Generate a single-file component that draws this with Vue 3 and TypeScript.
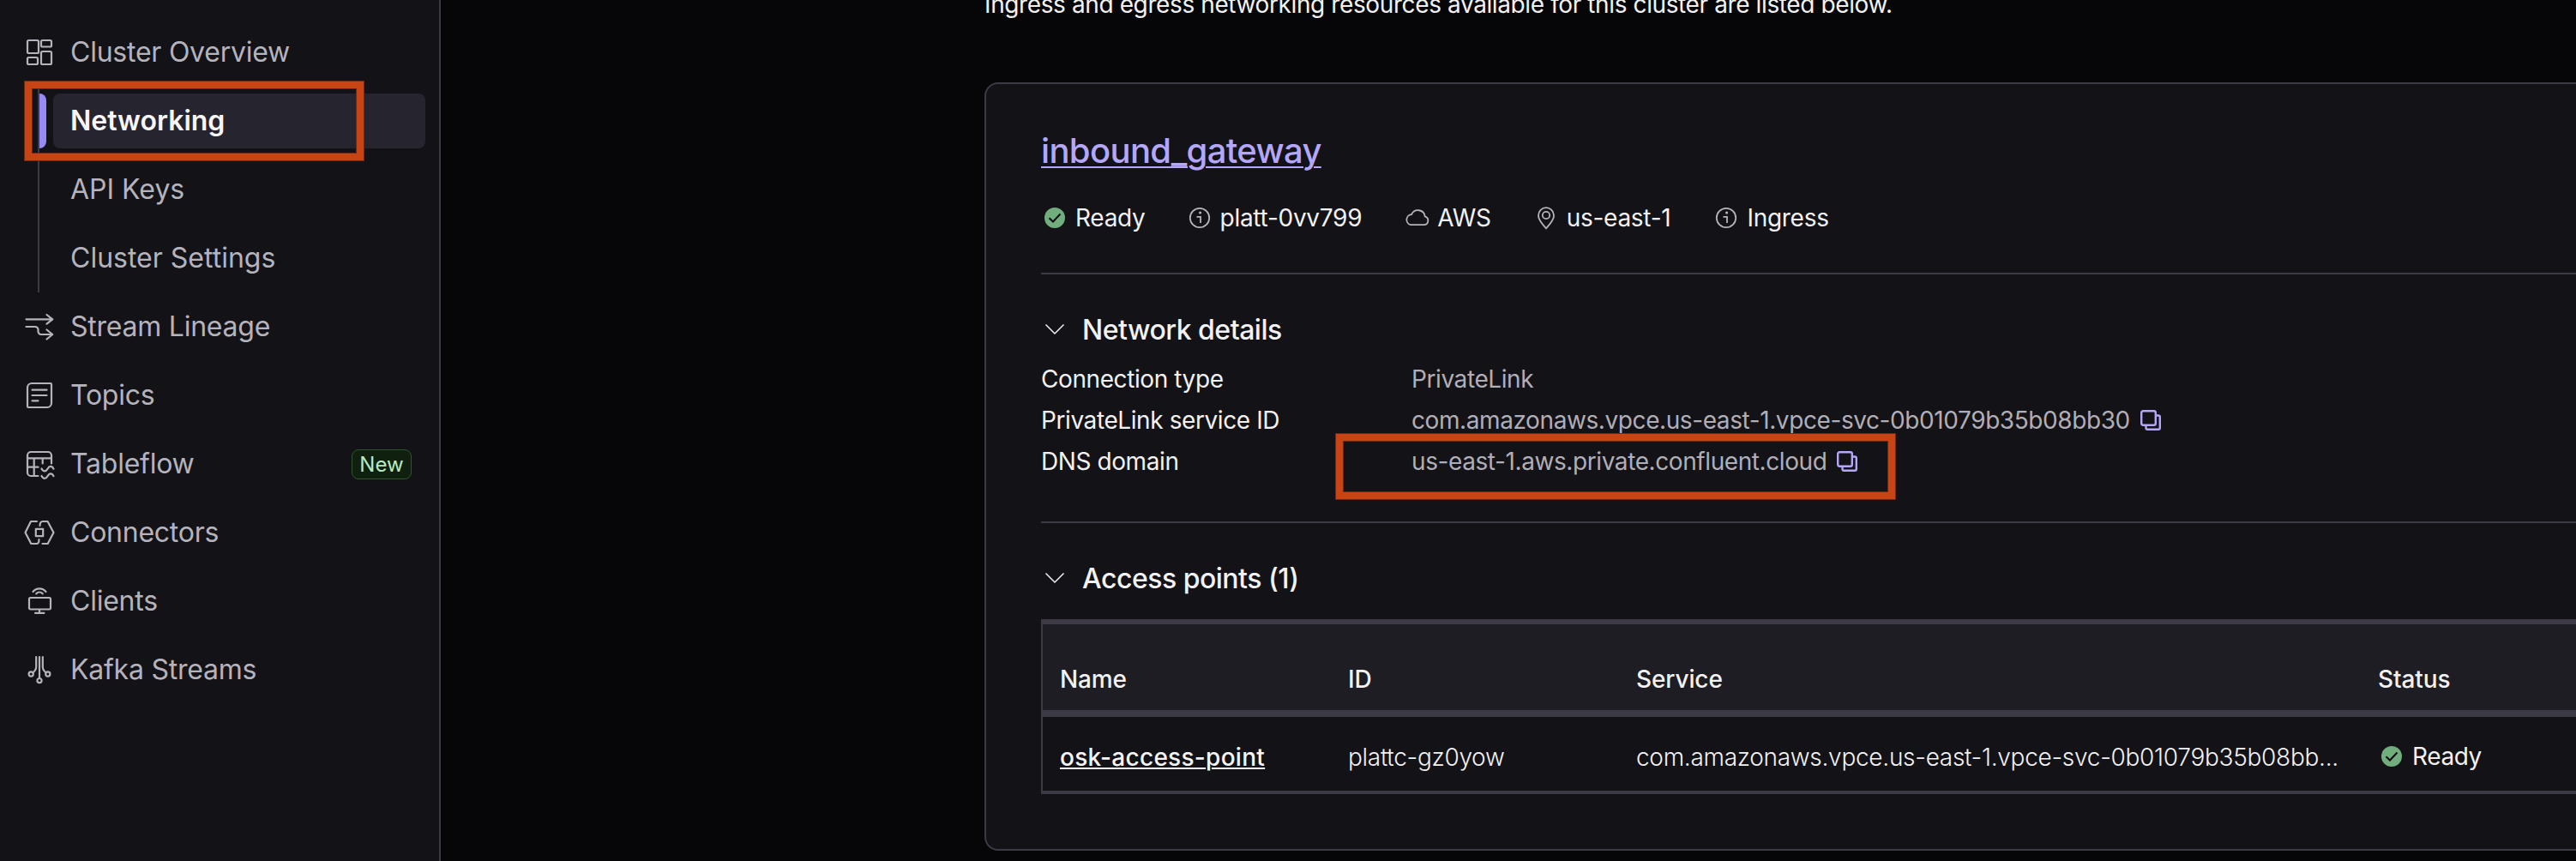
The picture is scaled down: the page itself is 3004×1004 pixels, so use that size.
<script setup lang="ts">
interface NavItem {
  label: string
  icon?: string
  active?: boolean
  badge?: string
}

const topItems: NavItem[] = [{ label: 'Cluster Overview', icon: 'overview' }]
const subItems: NavItem[] = [
  { label: 'Networking', active: true },
  { label: 'API Keys' },
  { label: 'Cluster Settings' },
]
const restItems: NavItem[] = [
  { label: 'Stream Lineage', icon: 'lineage' },
  { label: 'Topics', icon: 'topics' },
  { label: 'Tableflow', icon: 'tableflow', badge: 'New' },
  { label: 'Connectors', icon: 'connectors' },
  { label: 'Clients', icon: 'clients' },
  { label: 'Kafka Streams', icon: 'kafka' },
]

// Stroke paths on a 40x40 grid
const navPaths: Record<string, string> = {
  overview:
    'M7.5 6h10a1.5 1.5 0 0 1 1.5 1.5v12a1.5 1.5 0 0 1-1.5 1.5h-10a1.5 1.5 0 0 1-1.5-1.5v-12a1.5 1.5 0 0 1 1.5-1.5zM23.5 6h9a1.5 1.5 0 0 1 1.5 1.5v4.5a1.5 1.5 0 0 1-1.5 1.5h-9a1.5 1.5 0 0 1-1.5-1.5v-4.5a1.5 1.5 0 0 1 1.5-1.5zM7.5 26h9a1.5 1.5 0 0 1 1.5 1.5v5a1.5 1.5 0 0 1-1.5 1.5h-9a1.5 1.5 0 0 1-1.5-1.5v-5a1.5 1.5 0 0 1 1.5-1.5zM23.5 19h9a1.5 1.5 0 0 1 1.5 1.5v12a1.5 1.5 0 0 1-1.5 1.5h-9a1.5 1.5 0 0 1-1.5-1.5v-12a1.5 1.5 0 0 1 1.5-1.5z',
  lineage:
    'M4.5 11.3H35M28.5 6l6.8 5.3l-6.8 5.4M4.5 20H15a3.5 3.5 0 0 1 3.5 3.5V25.5a3.5 3.5 0 0 0 3.5 3.5H35M28.5 23.5l6.8 5.5l-6.8 5.5',
  topics:
    'M11 6H33a1 1 0 0 1 1 1V29a5 5 0 0 1-5 5H7a1 1 0 0 1-1-1V11a5 5 0 0 1 5-5zM11.5 13.7H28.5M11.5 20H28.5M11.5 26.3H18.5',
  tableflow:
    'M34 19.5V10a4 4 0 0 0-4-4H10a4 4 0 0 0-4 4V30a4 4 0 0 0 4 4H18.5M6 13.3H34M13.7 13.3V34M6 23.7H18.5M23.7 13.3V19.5M22.5 25.5c2 3.8 5 3.8 7 .2s5-3.8 7 0M22.5 34c2 3.8 5 3.8 7 .2s5-3.8 7 0',
  connectors:
    'M17 7H10L3.5 20L10.3 33H16.5C19 33 19.5 31.5 19.5 28M20.5 12C20.5 8.5 21.5 7 24 7H29.5L36.5 20L29.7 33H23.5M15.8 15.8H24.2V24.2H15.8Z',
  clients:
    'M9.5 16H31.5a1.5 1.5 0 0 1 1.5 1.5V28a1.5 1.5 0 0 1-1.5 1.5H9.5A1.5 1.5 0 0 1 8 28V17.5A1.5 1.5 0 0 1 9.5 16zM20 29.5V33.5M15 33.8H25.5M12.5 9C16.5 4.2 23.5 4.2 27.5 9M16.3 11.3C18.3 8.9 21.7 8.9 23.7 11.3',
  kafka:
    'M16.2 5V17C16.2 20.5 15.5 20.5 12.5 23.3M20 5V30M23.8 5V17C23.8 20.5 24.5 20.5 27.5 23.3M12.8 25a2.6 2.6 0 1 1-5.2 0a2.6 2.6 0 1 1 5.2 0zM22.6 32.6a2.6 2.6 0 1 1-5.2 0a2.6 2.6 0 1 1 5.2 0zM32.4 25a2.6 2.6 0 1 1-5.2 0a2.6 2.6 0 1 1 5.2 0z',
}

const facts = [
  { icon: 'check', text: 'Ready' },
  { icon: 'info', text: 'platt-0vv799' },
  { icon: 'cloud', text: 'AWS' },
  { icon: 'pin', text: 'us-east-1' },
  { icon: 'info', text: 'Ingress' },
]

const details = [
  { label: 'Connection type', value: 'PrivateLink', copy: false, marked: false },
  { label: 'PrivateLink service ID', value: 'com.amazonaws.vpce.us-east-1.vpce-svc-0b01079b35b08bb30', copy: true, marked: false },
  { label: 'DNS domain', value: 'us-east-1.aws.private.confluent.cloud', copy: true, marked: true },
]
</script>

<template>
  <div class="page">
    <aside class="sidebar">
      <div v-for="item in topItems" :key="item.label" class="nav-row">
        <svg class="nav-icon" viewBox="0 0 40 40"><path :d="navPaths[item.icon!]" /></svg>
        <span class="nav-label">{{ item.label }}</span>
      </div>
      <div class="sub-nav">
        <div v-for="item in subItems" :key="item.label" class="sub-row" :class="{ active: item.active }">
          <span class="nav-label">{{ item.label }}</span>
        </div>
        <div class="callout callout-nav"></div>
      </div>
      <div v-for="item in restItems" :key="item.label" class="nav-row">
        <svg class="nav-icon" viewBox="0 0 40 40"><path :d="navPaths[item.icon!]" /></svg>
        <span class="nav-label">{{ item.label }}</span>
        <span v-if="item.badge" class="badge">{{ item.badge }}</span>
      </div>
    </aside>

    <main class="main">
      <p class="intro">Ingress and egress networking resources available for this cluster are listed below.</p>
      <section class="card">
        <h2 class="title"><a>inbound_gateway</a></h2>
        <div class="facts">
          <div v-for="fact in facts" :key="fact.text" class="fact">
            <svg class="icon" viewBox="0 0 32 32">
              <template v-if="fact.icon === 'check'">
                <circle cx="16" cy="16" r="12" class="ok" />
                <path d="M9.5 16.2L14 20.5L22.5 11.5" class="tick" />
              </template>
              <template v-else-if="fact.icon === 'info'">
                <circle cx="16" cy="16" r="11.2" class="line" />
                <path d="M12.5 14.8H17V22" class="line" />
                <circle cx="16.6" cy="10" r="1.6" class="dot" />
              </template>
              <path v-else-if="fact.icon === 'cloud'" d="M9 24.2H24.5a5 5 0 0 0 1.2-9.8a8.2 8.2 0 0 0-15.7-2.2a6.1 6.1 0 0 0-1 12z" class="line" />
              <template v-else>
                <path d="M16 28.2C13 24.5 7 19.5 7 13.2a9 9 0 0 1 18 0C25 19.5 19 24.5 16 28.2z" class="line" />
                <circle cx="16" cy="13" r="4.2" class="line" />
              </template>
            </svg>
            <span>{{ fact.text }}</span>
          </div>
        </div>

        <div class="section-head">
          <svg class="icon" viewBox="0 0 32 32"><path d="M5.5 10.5L16 21L26.5 10.5" class="chev" /></svg>
          <span>Network details</span>
        </div>
        <dl class="details">
          <div v-for="d in details" :key="d.label" class="detail">
            <dt>{{ d.label }}</dt>
            <dd>
              <span>{{ d.value }}</span>
              <svg v-if="d.copy" class="copy" viewBox="0 0 24 24">
                <rect x="1.2" y="1.2" width="16.6" height="16.6" rx="2" />
                <path d="M18 6.5H21a1.8 1.8 0 0 1 1.8 1.8V21a1.8 1.8 0 0 1-1.8 1.8H8.3A1.8 1.8 0 0 1 6.5 21V18" />
              </svg>
              <div v-if="d.marked" class="callout callout-dns"></div>
            </dd>
          </div>
        </dl>

        <div class="section-head">
          <svg class="icon" viewBox="0 0 32 32"><path d="M5.5 10.5L16 21L26.5 10.5" class="chev" /></svg>
          <span>Access points (1)</span>
        </div>
        <div class="table">
          <div class="tr th">
            <span>Name</span><span>ID</span><span>Service</span><span>Status</span>
          </div>
          <div class="tr td">
            <span><a class="name">osk-access-point</a></span>
            <span>plattc-gz0yow</span>
            <span>com.amazonaws.vpce.us-east-1.vpce-svc-0b01079b35b08bb...</span>
            <span class="status">
              <svg class="icon" viewBox="0 0 32 32">
                <circle cx="16" cy="16" r="12" class="ok" />
                <path d="M9.5 16.2L14 20.5L22.5 11.5" class="tick" />
              </svg>
              <span>Ready</span>
            </span>
          </div>
        </div>
      </section>
    </main>
  </div>
</template>

<style>
body {
  background: #060608;
  overflow: hidden;
}
</style>

<style scoped>
.page {
  display: flex;
  width: 3004px;
  height: 1004px;
  overflow: hidden;
  background: #060608;
  color: #f2f1f3;
  font-family: Inter, "Liberation Sans", sans-serif;
  font-size: 28px;
  line-height: 48px;
  letter-spacing: -0.41px;
}

.sidebar {
  box-sizing: border-box;
  flex: none;
  width: 514px;
  padding: 21px 16px 0 26px;
  background: #131217;
  border-right: 2px solid #3d3a45;
  color: #b5b3bc;
  font-size: 32px;
  letter-spacing: -0.24px;
}

.nav-row {
  display: flex;
  align-items: center;
  height: 80px;
  padding-right: 16px;
}

.nav-icon {
  flex: none;
  width: 40px;
  height: 40px;
  margin-right: 16px;
  fill: none;
  stroke: currentColor;
  stroke-width: 2.2;
  stroke-linecap: round;
  stroke-linejoin: round;
}

.nav-label {
  white-space: nowrap;
}

.badge {
  box-sizing: border-box;
  height: 35px;
  width: 70px;
  margin-left: auto;
  border: 1px solid #2d5630;
  border-radius: 8px;
  background: #10200f;
  color: #b5ebc0;
  font-size: 24px;
  line-height: 33px;
  letter-spacing: 0;
  text-align: center;
}

.sub-nav {
  position: relative;
  display: flex;
  flex-direction: column;
  gap: 16px;
  box-sizing: border-box;
  height: 240px;
  margin-left: 18px;
  padding: 8px 0 8px 16px;
  border-left: 2px solid #3d3a45;
}

.sub-row {
  display: flex;
  align-items: center;
  height: 64px;
  padding-left: 20px;
  border-radius: 8px;
  letter-spacing: 0;
}

.sub-row.active {
  position: relative;
  background: #26242e;
  color: #f6f5f7;
  font-weight: 600;
}

.sub-row.active::before {
  content: "";
  position: absolute;
  left: -16px;
  top: 0;
  width: 8px;
  height: 64px;
  border-radius: 0 8px 8px 0;
  background: #968af5;
}

.callout {
  position: absolute;
  box-sizing: border-box;
  border: 8px solid #c84414;
  outline: 1px solid #6b2a13;
  pointer-events: none;
}

.callout::after {
  content: "";
  position: absolute;
  inset: 0;
  border: 1px solid #6b2a13;
}

.callout-nav {
  left: -17px;
  top: -6px;
  width: 395px;
  height: 92px;
}

.callout-dns {
  left: -88px;
  top: -8px;
  width: 652px;
  height: 76px;
}

.main {
  flex: none;
  width: 2490px;
  padding-left: 634px;
  box-sizing: border-box;
  overflow: hidden;
}

.intro {
  height: 48px;
  margin: -19px 0 67px;
  white-space: nowrap;
  letter-spacing: -0.39px;
}

.card {
  box-sizing: border-box;
  width: 2000px;
  height: 896px;
  padding: 50px 64px 0;
  border: 2px solid #3d3a45;
  border-radius: 16px;
  background: #131217;
}

.title {
  margin: 0;
  font-size: 40px;
  font-weight: 500;
  line-height: 56px;
  letter-spacing: -0.64px;
  color: #b5a7f7;
}

.title a {
  text-decoration: underline;
  text-decoration-thickness: 2px;
  text-underline-offset: 4px;
}

.facts {
  display: flex;
  gap: 48px;
  height: 88px;
  padding-top: 26px;
  border-bottom: 2px solid #3d3a45;
  letter-spacing: -0.28px;
}

.fact {
  display: flex;
  align-items: center;
  gap: 8px;
  height: 48px;
}

.fact:first-child {
  margin-right: -1px;
}

.fact:last-child {
  margin-left: 1px;
}

.icon {
  flex: none;
  width: 32px;
  height: 32px;
  fill: none;
}

.ok {
  fill: #72ad7e;
}

.tick {
  stroke: #0b0b0e;
  stroke-width: 2;
}

.line {
  stroke: #b5b3bc;
  stroke-width: 1.8;
}

.dot {
  fill: #b5b3bc;
}

.chev {
  stroke: #f2f1f3;
  stroke-width: 1.5;
}

.section-head {
  display: flex;
  align-items: center;
  gap: 16px;
  height: 48px;
  margin-top: 40px;
  font-size: 32px;
  font-weight: 500;
  letter-spacing: -0.5px;
}

.section-head span {
  padding-top: 2px;
}

.details {
  margin: 10px 0 0;
  padding-bottom: 46px;
  border-bottom: 2px solid #3d3a45;
}

.detail {
  display: flex;
  height: 48px;
}

.detail dt {
  width: 432px;
}

.detail dd {
  position: relative;
  display: flex;
  align-items: center;
  gap: 12px;
  margin: 0;
  color: #b0aeb6;
  white-space: nowrap;
}

.copy {
  width: 24px;
  height: 24px;
  fill: none;
  stroke: #b5a7f7;
  stroke-width: 2.4;
}

.table {
  margin-top: 24px;
  border-left: 2px solid #3d3a45;
  border-top: 6px solid #3d3a45;
  border-bottom: 4px solid #3d3a45;
}

.tr {
  display: grid;
  grid-template-columns: 336px 336px 865px 1fr;
  padding-left: 20px;
  white-space: nowrap;
}

.th {
  height: 60px;
  padding-top: 40px;
  border-bottom: 8px solid #3d3a45;
  background: #1e1d23;
  font-weight: 500;
  letter-spacing: -0.12px;
}

.td {
  height: 63px;
  padding-top: 23px;
  font-weight: 300;
  letter-spacing: -0.29px;
}

.name {
  color: #f6f5f7;
  font-weight: 500;
  letter-spacing: 0.28px;
  text-decoration: underline;
  text-decoration-thickness: 2px;
  text-underline-offset: 2px;
}

.status {
  display: flex;
  align-items: center;
  gap: 8px;
  height: 48px;
  margin-top: -1px;
  font-weight: 400;
  letter-spacing: -0.4px;
}
</style>
